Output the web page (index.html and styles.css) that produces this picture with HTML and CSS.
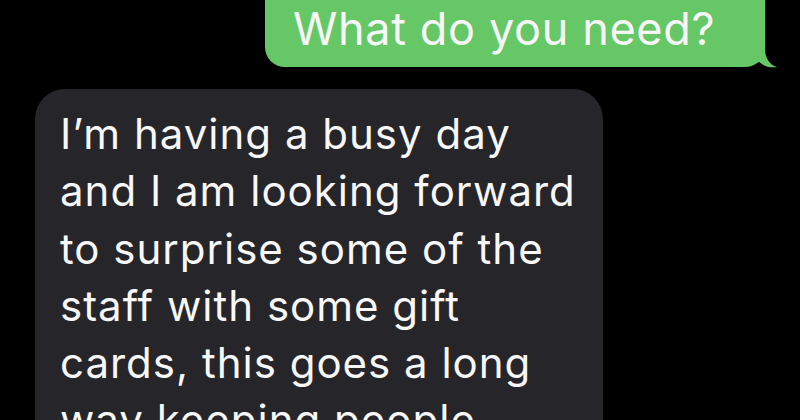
FILE: index.html
```html
<!DOCTYPE html>
<html>
<head>
<meta charset="utf-8">
<link rel="stylesheet" href="styles.css">
</head>
<body>
<div class="thread">
  <div class="row row-out">
    <div class="bubble bubble-out">
      <p class="msg msg-out">What do you need?</p>
      <svg class="tail" width="30" height="24" viewBox="0 0 30 24">
        <path d="M0 0 L16 0 L16 4 C16 12 20 20 28 22 C22 23 16 22 10 17 C7 18 3 19 0 19 Z" fill="#66c766"/>
      </svg>
    </div>
  </div>
  <div class="row row-in">
    <div class="bubble bubble-in">
      <p class="msg msg-in">I’m having a busy day<br>and I am looking forward<br>to surprise some of the<br>staff with some gift<br>cards, this goes a long<br>way keeping people<br>happy</p>
    </div>
  </div>
</div>
</body>
</html>
```
FILE: styles.css
```css
html, body {
  margin: 0;
  padding: 0;
  background: #000;
  width: 800px;
  height: 420px;
  overflow: hidden;
}
.thread {
  display: flex;
  flex-direction: column;
  gap: 22px;
  font-family: Inter, "Noto Sans", sans-serif;
  color: #f7f7f7;
}
.row {
  display: flex;
}
.row-out {
  justify-content: flex-end;
  padding-right: 35px;
  margin-top: -40px;
}
.row-in {
  justify-content: flex-start;
  padding-left: 35px;
}
.bubble {
  position: relative;
}
.bubble-out {
  background: #66c766;
  width: 500px;
  box-sizing: border-box;
  border-radius: 20px;
  padding: 44px 20px 14px 28px;
  height: 107px;
}
.bubble-in {
  background: #262529;
  width: 568px;
  box-sizing: border-box;
  border-radius: 30px;
  padding: 16px 20px 20px 25px;
}
.msg {
  margin: 0;
}
.msg-out {
  font-size: 45px;
  line-height: 50px;
  letter-spacing: 0.65px;
}
.msg-in {
  font-size: 42px;
  line-height: 57.3px;
  letter-spacing: 1px;
}
.tail {
  position: absolute;
  right: -14px;
  bottom: -2px;
}
```
